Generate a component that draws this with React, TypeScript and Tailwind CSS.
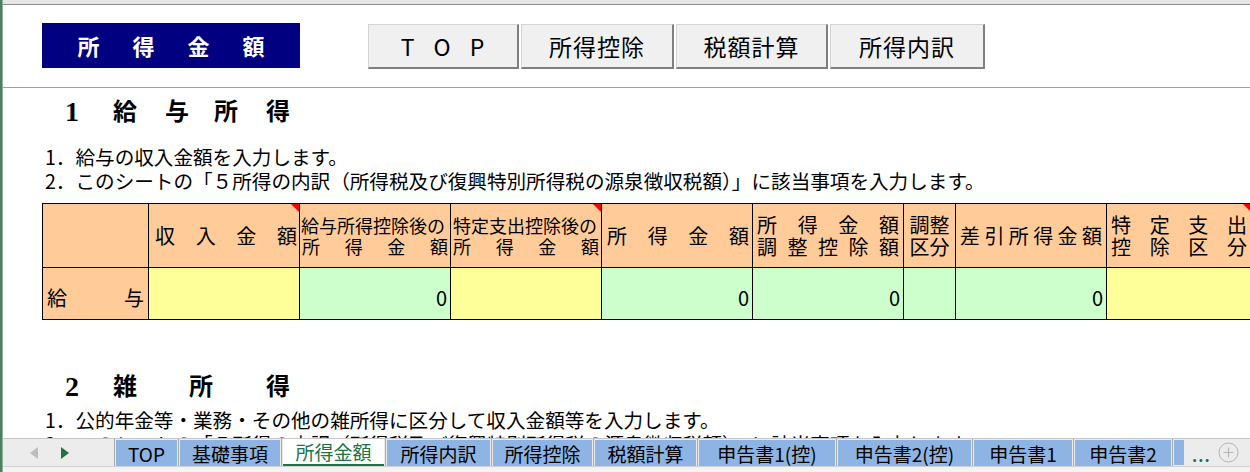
import React from "react";

const TABS = [
  { name: "TOP", w: "w-[61px]" },
  { name: "基礎事項", w: "w-[100px]" },
  { name: "所得金額", w: "w-[101px]", active: true },
  { name: "所得内訳", w: "w-[103px]" },
  { name: "所得控除", w: "w-[99px]" },
  { name: "税額計算", w: "w-[101px]" },
  { name: "申告書1(控)", w: "w-[136px]" },
  { name: "申告書2(控)", w: "w-[133px]" },
  { name: "申告書1", w: "w-[98px]" },
  { name: "申告書2", w: "w-[96px]" },
];

const BUTTONS = [
  { name: "T O P", w: "w-[151px]", spaced: true },
  { name: "所得控除", w: "w-[153px]" },
  { name: "税額計算", w: "w-[152px]" },
  { name: "所得内訳", w: "w-[155px]" },
];

function Dist({ chars, className = "" }: { chars: string; className?: string }) {
  return (
    <div className={`flex justify-between ${className}`}>
      {Array.from(chars).map((c, i) => (
        <span key={i}>{c}</span>
      ))}
    </div>
  );
}

function RedMark() {
  return (
    <svg className="absolute top-0 right-0" width="8" height="8" viewBox="0 0 8 8">
      <polygon points="0,0 8,0 8,8" fill="#ff0000" />
    </svg>
  );
}

function Sep() {
  return (
    <div className="w-[3px] h-full flex justify-center">
      <div className="w-px h-full bg-[#a8a8a8]" />
    </div>
  );
}

export default function App() {
  const head = "relative bg-[#ffcc99] border-r border-b border-black flex flex-col justify-center";
  const cell = "border-r border-b border-black flex items-end justify-end pr-[3px] pb-[9px] leading-[24px]";

  return (
    <div className="w-[1250px] h-[472px] flex overflow-hidden bg-white text-black font-['Noto_Sans_CJK_JP',sans-serif]">
      {/* left frame */}
      <div className="w-[3px] h-full bg-[#4f7f5e] border-r border-[#8fb39a]" />

      <div className="flex-1 flex flex-col min-w-0">
        {/* top strip */}
        <div className="h-[5px] shrink-0 bg-[#e6e6e6] border-b border-[#8c8c8c]" />

        {/* header row */}
        <div className="h-[83px] shrink-0 flex items-start pt-[18px] border-b border-[#a0a0a0]">
          <div className="ml-[39px] w-[258px] h-[45px] bg-[#000080] text-white flex items-center justify-center gap-[33px] text-[22px] font-bold">
            <span>所</span>
            <span>得</span>
            <span>金</span>
            <span>額</span>
          </div>
          <div className="ml-[68px] flex gap-[2px] mt-[1px]">
            {BUTTONS.map((b) => (
              <div
                key={b.name}
                className={`${b.w} h-[45px] bg-[#f0f0f0] border border-[#d4d4d4] border-r-[#7f7f7f] border-b-[#7f7f7f] border-r-2 border-b-2 flex items-center justify-center text-[23px] tracking-[1px]`}
              >
                {b.spaced ? (
                  <div className="flex gap-[18px]">
                    <span>T</span>
                    <span>O</span>
                    <span>P</span>
                  </div>
                ) : (
                  b.name
                )}
              </div>
            ))}
          </div>
        </div>

        {/* sheet body */}
        <div className="flex-1 min-h-0 overflow-hidden">
          <div className="mt-[9px] ml-[62px] flex items-center h-[30px] text-[24px] font-bold font-['Liberation_Serif','Noto_Sans_CJK_JP',serif]">
            <span className="w-[48px] text-[28px]">1</span>
            <span className="w-[52px]">給</span>
            <span className="w-[49px]">与</span>
            <span className="w-[52px]">所</span>
            <span>得</span>
          </div>

          <div className="mt-[18px] ml-[42px] text-[19.6px] leading-[24px]">
            <div>1．給与の収入金額を入力します。</div>
            <div>2．このシートの「５所得の内訳（所得税及び復興特別所得税の源泉徴収税額）」に該当事項を入力します。</div>
          </div>

          {/* table */}
          <div className="mt-[10px] ml-[39px] w-[1220px] grid grid-cols-[106px_151px_151px_151px_151px_151px_52px_151px_145px] grid-rows-[64px_52px] border-l border-t border-black text-[20px]">
            <div className={head} />
            <div className={head}>
              <Dist chars="収入金額" className="pl-[6px] pr-[2px]" />
              <RedMark />
            </div>
            <div className={`${head} text-[18px] leading-[21px]`}>
              <div className="pl-[1px] whitespace-nowrap">給与所得控除後の</div>
              <Dist chars="所得金額" className="px-[2px]" />
            </div>
            <div className={`${head} text-[18px] leading-[21px]`}>
              <div className="pl-[2px] whitespace-nowrap">特定支出控除後の</div>
              <Dist chars="所得金額" className="px-[2px]" />
              <RedMark />
            </div>
            <div className={head}>
              <Dist chars="所得金額" className="pl-[5px] pr-[3px]" />
            </div>
            <div className={`${head} leading-[22px]`}>
              <Dist chars="所得金額" className="px-[4px]" />
              <Dist chars="調整控除額" className="px-[4px]" />
            </div>
            <div className={`${head} leading-[22px] items-center`}>
              <div>調整</div>
              <div>区分</div>
            </div>
            <div className={head}>
              <Dist chars="差引所得金額" className="px-[4px]" />
            </div>
            <div className={`${head} leading-[22px]`}>
              <Dist chars="特定支出" className="px-[4px]" />
              <Dist chars="控除区分" className="px-[4px]" />
              <RedMark />
            </div>

            <div className="bg-[#ffcc99] border-r border-b border-black flex flex-col justify-end pb-[9px] leading-[24px]">
              <Dist chars="給与" className="px-[4px]" />
            </div>
            <div className={`${cell} bg-[#ffff99]`} />
            <div className={`${cell} bg-[#ccffcc]`}>0</div>
            <div className={`${cell} bg-[#ffff99]`} />
            <div className={`${cell} bg-[#ccffcc]`}>0</div>
            <div className={`${cell} bg-[#ccffcc]`}>0</div>
            <div className={`${cell} bg-[#ccffcc]`} />
            <div className={`${cell} bg-[#ccffcc]`}>0</div>
            <div className={`${cell} bg-[#ffff99]`} />
          </div>

          <div className="mt-[52px] ml-[62px] flex items-center h-[30px] text-[24px] font-bold font-['Liberation_Serif','Noto_Sans_CJK_JP',serif]">
            <span className="w-[48px] text-[28px]">2</span>
            <span className="w-[76px]">雑</span>
            <span className="w-[77px]">所</span>
            <span>得</span>
          </div>

          <div className="mt-[6px] ml-[42px] text-[19.6px] leading-[24px]">
            <div>1．公的年金等・業務・その他の雑所得に区分して収入金額等を入力します。</div>
            <div>2．このシートの「５所得の内訳（所得税及び復興特別所得税の源泉徴収税額）」に該当事項を入力します。</div>
          </div>
        </div>

        {/* sheet tabs */}
        <div className="h-[28px] shrink-0 flex bg-[#ececec] border-t border-[#c6c6c6] text-[19px] leading-none">
          <div className="w-[110px] h-full flex items-center pl-[27px] gap-[23px]">
            <svg width="8" height="12" viewBox="0 0 8 12">
              <polygon points="8,0 0,6 8,12" fill="#bdbdbd" />
            </svg>
            <svg width="8" height="12" viewBox="0 0 8 12">
              <polygon points="0,0 8,6 0,12" fill="#217346" />
            </svg>
          </div>
          <Sep />
          {TABS.map((t, i) => (
            <React.Fragment key={t.name}>
              {i > 0 && <Sep />}
              <div
                className={`${t.w} h-full flex items-center justify-center ${
                  t.active
                    ? "bg-white text-[#217346] border-b-2 border-[#217346]"
                    : "bg-[#8db4e2] mt-[1px] h-[25px]"
                }`}
              >
                {t.name}
              </div>
            </React.Fragment>
          ))}
          <Sep />
          <div className="w-[10px] h-[25px] mt-[1px] bg-[#8db4e2]" />
          <div className="ml-[8px] h-full flex items-center text-[#217346] font-bold text-[16px] tracking-[1px] pt-[4px]">
            ...
          </div>
          <div className="ml-[7px] h-full flex items-center">
            <svg width="21" height="21" viewBox="0 0 21 21">
              <circle cx="10.5" cy="10.5" r="9.5" fill="none" stroke="#b5b5b5" strokeWidth="1" />
              <path d="M10.5 5.5v10M5.5 10.5h10" stroke="#b5b5b5" strokeWidth="1.2" />
            </svg>
          </div>
        </div>

        {/* bottom strip */}
        <div className="h-[6px] shrink-0 bg-[#f3f3f3] border-t border-[#d0d0d0]" />
      </div>
    </div>
  );
}
